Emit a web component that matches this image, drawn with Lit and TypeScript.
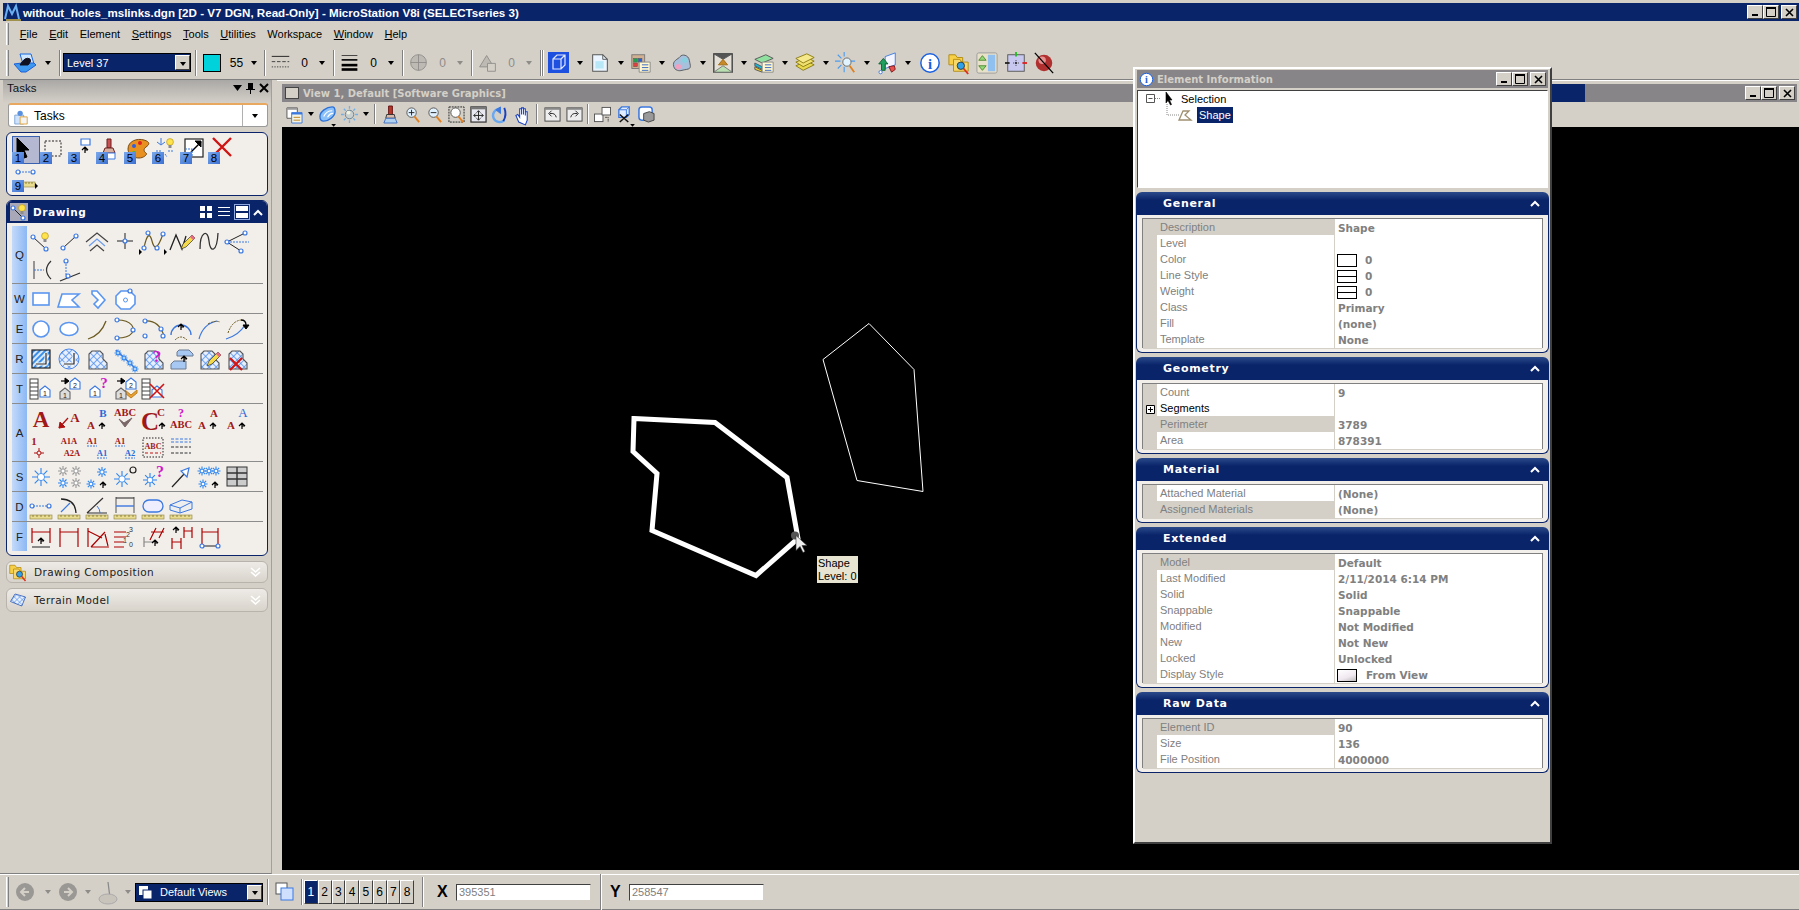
import { LitElement, html, css, svg } from 'lit';
import { customElement } from 'lit/decorators.js';

// small svg helpers, everything below is drawn in a 28x28 (or 24x24) box
const BL = '#3b78e0';
const P = (x: number, y: number) => svg`<circle cx=${x} cy=${y} r="2" fill="#fff" stroke=${BL} stroke-width="1.2"/>`;
const L = (d: string, c = '#222', w = 1, dash = '') =>
  svg`<path d=${d} fill="none" stroke=${c} stroke-width=${w} stroke-dasharray=${dash}/>`;
const F = (d: string, fill: string, c = BL, w = 1) => svg`<path d=${d} fill=${fill} stroke=${c} stroke-width=${w}/>`;
const T = (x: number, y: number, size: number, t: string, c = '#a01818', anchor = 'middle', font = 'Liberation Serif', weight = 'bold') =>
  svg`<text x=${x} y=${y} font-size=${size} fill=${c} text-anchor=${anchor} font-family=${font} font-weight=${weight}>${t}</text>`;
const fly = (x = 23, y = 24) => svg`<path d="M${x} ${y - 3}l3 3-3 3z" fill="#000"/>`;
const up = (x: number, y: number) => L(`M${x} ${y}v-6m-3 3l3-3 3 3m-3 0h3`, '#000', 1.2);
const bulb = (x: number, y: number) => svg`<circle cx=${x} cy=${y} r="3.4" fill="#ffe34d" stroke="#b79a20" stroke-width=".7"/><rect x=${x - 1.5} y=${y + 3} width="3" height="3" fill="#8b8b8b"/>`;
const pencil = (x: number, y: number) => svg`<path d="M${x} ${y}l2-5 9-9 3 3-9 9z" fill="#f4d94a" stroke="#333" stroke-width=".7"/><path d="M${x + 9} ${y - 12}l2-2 3 3-2 2z" fill="#e86a8a"/>`;
const redX = (x: number, y: number, r = 6, w = 2) => L(`M${x - r} ${y - r}L${x + r} ${y + r}M${x + r} ${y - r}L${x - r} ${y + r}`, '#d01414', w);
const star = (x: number, y: number, r = 6, c = '#2f86f0') => svg`
  ${L(`M${x - r} ${y}H${x + r}M${x} ${y - r}V${y + r}M${x - r * .7} ${y - r * .7}L${x + r * .7} ${y + r * .7}M${x + r * .7} ${y - r * .7}L${x - r * .7} ${y + r * .7}`, c, 1.1)}
  <circle cx=${x} cy=${y} r=${r * .4} fill="#fff" stroke=${c} stroke-width=".8"/>`;
const blob = 'M6 24V9l3-3h8l3 3 0 5 4 4v6z';
const tag = (x: number, y: number, n: string, fill = '#fff', c = BL) => svg`
  <path d="M${x - 5} ${y - 3}l5-4 5 4v7h-10z" fill=${fill} stroke=${c} stroke-width="1.1"/>
  ${T(x, y + 3, 7, n, '#222', 'middle', 'Liberation Sans', 'normal')}`;
const ruler = svg`<rect x="3" y="22" width="22" height="4" fill="#e9dc8e" stroke="#8a8040" stroke-width=".6"/>
  ${L('M6 22v2M10 22v2M14 22v2M18 22v2M22 22v2', '#6a6030', .7)}`;
const ruled = svg`<rect x="3" y="4" width="8" height="20" fill="#fff" stroke="#444"/>${L('M3 8h8M3 12h8M3 16h8M3 20h8', '#444')}`;

// Drawing task rows, each row has its tab letter and cells of 28px
const ROWS: { k: string; n: number; icons: unknown[] }[] = [
  { k: 'Q', n: 2, icons: [
    svg`${L('M6 10L19 22')}${P(6, 10)}${P(19, 22)}${bulb(18, 9)}`,
    svg`${L('M8 21L21 9')}${P(8, 21)}${P(21, 9)}`,
    svg`${L('M3 15L14 6 25 15', '#444', 1.2)}${L('M6 19L14 12 22 19', '#6a9cf0', 1.2)}${L('M7 24L14 18 21 24', '#444', 1.2)}`,
    svg`${L('M6 14H22M14 6V22')}${P(14, 14)}`,
    svg`${L('M5 21C8 6 11 6 13 14S18 24 24 7', '#6b5a20', 1.2)}${P(5, 21)}${P(9, 6)}${P(18, 21)}${P(24, 7)}${fly(0, 25)}${fly(25, 25)}`,
    svg`${L('M3 23L9 8 15 22 19 9', '#222', 1.3)}${pencil(14, 22)}`,
    svg`${L('M5 22C5 4 13 2 14 14S22 26 23 6', '#333', 1.3)}`,
    svg`${L('M4 15L22 6M4 15L18 24')}${L('M4 15H26', BL, 1, '2 1')}${P(4, 15)}${P(22, 6)}${P(18, 24)}`,
    svg`${L('M7 6V24', '#777', 1.5)}${L('M7 15H17', BL, 1, '2 1')}${L('M24 6Q15 15 24 24', '#333', 1.2)}`,
    svg`${L('M11 6V20', BL, 1, '2 1')}${L('M5 26L25 18', '#333', 1.2)}${P(11, 6)}${P(13, 21)}`,
  ] },
  { k: 'W', n: 1, icons: [
    svg`<rect x="6" y="8" width="16" height="12" fill="#fff" stroke="#5a96f0" stroke-width="1.6"/>`,
    F('M3 22L7 9H24L17 15 24 22z', '#fff', '#5a96f0', 1.6),
    F('M9 6H14L22 15 15 23 11 19 15 15 9 9z', '#fff', '#5a96f0', 1.6),
    svg`${F('M10 6H19L24 11V19L19 24H10L5 19V11z', '#fff', '#5a96f0', 1.6)}<circle cx="14.5" cy="15" r="2" fill="none" stroke="#5a96f0"/>${P(19, 6)}`,
  ] },
  { k: 'E', n: 1, icons: [
    svg`<circle cx="14" cy="14" r="8" fill="#fff" stroke="#5a96f0" stroke-width="1.6"/>`,
    svg`<ellipse cx="14" cy="14" rx="9" ry="6.5" fill="#fff" stroke="#5a96f0" stroke-width="1.6"/>`,
    L('M5 24Q18 20 23 6', '#6b5a20', 1.3),
    svg`${L('M6 5C22 5 24 14 21 18S12 23 6 23', '#6b5a20', 1.2)}${P(6, 5)}${P(22, 15)}${P(6, 23)}`,
    svg`${L('M6 6Q20 5 25 21', '#6b5a20', 1.2)}${P(6, 6)}${P(22, 14)}${P(6, 21)}${P(24, 21)}`,
    svg`${L('M4 20A10 10 0 0 1 24 20', BL, 1.4)}${up(14, 15)}${L('M8 25Q14 19 20 25', '#6b5a20', 1, '2 1')}`,
    svg`${L('M4 24Q8 9 22 6', BL, 1.2)}${L('M13 9Q20 5 25 7', '#6b5a20', 1, '2 1')}`,
    svg`${L('M3 24Q16 20 22 10', BL, 1.2)}${L('M5 18Q9 6 18 5', '#6b5a20', 1, '2 1')}${L('M18 5Q23 5 23 10', '#000', 1.3)}${F('M20 10h6l-3 4z', '#000', '#000')}`,
  ] },
  { k: 'R', n: 1, icons: [
    svg`<rect x="5" y="5" width="18" height="18" fill="url(#hatch)" stroke="#222" stroke-width="1.2"/>${L('M9 19H19V8', '#fff', 3)}${L('M9 19H19V8', '#222', 1.2)}`,
    svg`<circle cx="14" cy="14" r="10" fill="url(#lat)" stroke="#4a86e8"/>${L('M9 19H19V8', '#fff', 3)}${L('M9 19H19V8', '#222', 1.2)}`,
    F(blob, 'url(#lat)', '#555', 1.1),
    svg`${L('M5 5L24 23', BL, 1.6)}${star(7, 8, 3.5)}${star(13, 13, 3.5)}${star(19, 18, 3.5)}${star(24, 24, 3.5)}`,
    svg`${F(blob, 'url(#lat)', '#555', 1.1)}${T(18, 17, 17, '?', '#d018c8')}`,
    svg`${F('M10 11V7l2-2h10l4 4v2z', '#a8c8f4', '#6a7a90')}${F('M4 24V19l3-3h12v8z', '#a8c8f4', '#6a7a90')}${up(17, 17)}`,
    svg`${F(blob, 'url(#lat)', '#555', 1.1)}${pencil(12, 21)}`,
    svg`${F(blob, 'url(#lat)', '#555', 1.1)}${redX(13, 19, 6, 2.2)}`,
  ] },
  { k: 'T', n: 1, icons: [
    svg`${ruled}${tag(18, 18, '1')}`,
    svg`${L('M6 6h6', '#000', 1.2)}${F('M10 3l4 3-4 3z', '#000', '#000')}${tag(10, 20, '1', '#ddd', '#666')}${tag(20, 10, '2')}`,
    svg`${tag(12, 18, '1')}${T(21, 13, 15, '?', '#d018c8')}`,
    svg`${L('M6 6h6', '#000', 1.2)}${F('M10 3l4 3-4 3z', '#000', '#000')}${F('M14 18l6 5 6-5v-3l-6 5-6-5z', '#e8a030', '#c08020')}${tag(10, 20, '1', '#ddd', '#666')}${tag(20, 10, '2')}`,
    svg`${ruled}${tag(18, 18, '', '#fff')}${redX(18, 16, 7, 1.6)}`,
  ] },
  { k: 'A', n: 2, icons: [
    T(14, 22, 23, 'A'),
    svg`${T(20, 17, 13, 'A')}${L('M4 23L13 13', '#b01010', 1.3)}${F('M4 23l1-6 5 5z', '#b01010', '#b01010')}`,
    svg`${T(8, 24, 11, 'A')}${T(20, 12, 11, 'B', '#2a68d8')}${up(19, 24)}`,
    svg`${T(14, 11, 10.5, 'ABC')}${F('M8 14l5 4 8-5-7 9z', '#7a6868', '#7a6868')}`,
    svg`${T(11, 25, 25, 'C')}${T(22, 11, 11, 'C')}${up(23, 24)}`,
    svg`${T(14, 12, 12, '?', '#d018c8')}${T(14, 23, 10.5, 'ABC')}`,
    svg`${T(7, 24, 11, 'A')}${T(19, 12, 11, 'A')}${up(18, 24)}`,
    svg`${T(8, 24, 11, 'A')}${T(20, 12, 13, 'A', '#2a68d8', 'middle', 'Liberation Serif', 'normal')}${up(19, 24)}`,
    svg`${T(7, 12, 11, '1')}${L('M12 15V25M7 20H17', '#b01010')}<circle cx="12" cy="20" r="2" fill="#f2eeea" stroke="#b01010"/>`,
    svg`${T(14, 11, 8.5, 'A1A')}${T(17, 23, 8.5, 'A2A')}`,
    svg`${T(9, 11, 8.5, 'A1')}${L('M4 13h10', BL, 1, '2 1')}${T(19, 23, 8.5, 'A1', '#2a68d8')}${L('M14 25h10', BL, 1, '2 1')}`,
    svg`${T(9, 11, 8.5, 'A1')}${L('M4 13h10', BL, 1, '2 1')}${T(19, 23, 8.5, 'A2', '#2a68d8')}${L('M14 25h10', BL, 1, '2 1')}`,
    svg`<rect x="4" y="5" width="20" height="19" fill="none" stroke="#222" stroke-dasharray="1.5 1.5"/>${T(14, 16, 8, 'ABC')}${L('M6 20h16', '#c01010', 1, '3 2')}`,
    svg`${L('M4 6h20M4 9h20', BL, 1, '3 1.5')}${L('M4 14h20M4 20h20', '#333', 1, '3 1.5')}`,
  ] },
  { k: 'S', n: 1, icons: [
    star(14, 14, 9),
    svg`${star(8, 8, 5, '#999')}${star(21, 8, 5, '#999')}${star(8, 20, 5)}${star(21, 20, 5, '#999')}`,
    svg`${star(8, 21, 4.5)}${star(19, 9, 5)}${up(20, 25)}`,
    svg`${star(11, 16, 8)}<circle cx="22" cy="7" r="3" fill="none" stroke="#222" stroke-width="1.2"/>`,
    svg`${star(11, 17, 7)}${T(21, 14, 16, '?', '#d018c8')}`,
    svg`${L('M5 24L18 10', '#222', 1.2)}${F('M14 8l8-3-2 9z', '#fff', BL, 1.2)}`,
    svg`${star(7, 8, 4.5)}${star(14, 8, 4.5)}${star(21, 8, 4.5)}${star(8, 21, 4.5)}${up(20, 25)}`,
    svg`<rect x="4" y="4" width="20" height="19" fill="#ccc" stroke="#333"/>${L('M4 10h20M4 16h20M14 4v19', '#333', 1.4)}`,
  ] },
  { k: 'D', n: 1, icons: [
    svg`${L('M6 13h14', BL, 1, '2 1')}${P(5, 13)}${P(22, 13)}${ruler}`,
    svg`${L('M6 6Q20 6 21 20', '#222', 1.3)}${L('M6 19L15 10', BL, 1.2)}${ruler}`,
    svg`${L('M4 20L20 5M4 20H24', '#333', 1.2)}${L('M14 13Q17 16 17 20', BL)}${ruler}`,
    svg`${L('M5 4V20M23 4V20', '#555')}${L('M5 5H23', '#222')}${L('M5 13H23', BL, 1.4)}${ruler}`,
    svg`<rect x="4" y="7" width="20" height="12" rx="6" fill="#eef" stroke=${BL} stroke-width="1.3"/>${ruler}`,
    svg`${F('M3 12L15 7l10 2v7L13 20 3 17z', '#eee', BL)}${L('M3 12l10 3 12-6M13 15v5', BL)}${ruler}`,
  ] },
  { k: 'F', n: 1, icons: [
    svg`${L('M5 5V20M23 5V20M5 9H23', '#a00', 1.2)}${L('M5 24H23', '#222', 1.2)}${up(14, 21)}`,
    L('M5 5V24M23 5V24M5 9H23', '#a00', 1.2),
    svg`${L('M5 5V24M5 8L19 15M22 11L25 23M8 24H26M8 24L22 9', '#a00', 1.2)}`,
    svg`${L('M3 9H15M3 14H15M3 19H13M3 24H13', '#a00', 1.2)}${T(20, 9, 7, '3', '#333', 'middle', 'Liberation Sans', 'normal')}${T(17, 14, 7, '2', '#333', 'middle', 'Liberation Sans', 'normal')}${T(14, 20, 7, '1', '#333', 'middle', 'Liberation Sans', 'normal')}${T(20, 24, 7, '0', '#333', 'middle', 'Liberation Sans', 'normal')}`,
    svg`${L('M5 14V24M5 19H15', '#888', 1.2)}${L('M17 5L11 17M25 5L20 15M12 9H25', '#a00', 1.2)}${up(16, 23)}`,
    svg`${L('M5 15V26M14 15V26M5 19H14M17 4V15M25 4V15M17 8H25', '#a00', 1.2)}${up(9, 10)}`,
    svg`${L('M7 5V23M23 5V23M7 9H23', '#a00', 1.2)}${L('M7 23H23', '#222', 1.2)}${P(7, 23)}${P(23, 23)}`,
  ] },
];

const arrowPath = 'M5 2V19L9 15 12 22 15 21 12 14 17 14z';
const PICK: unknown[] = [
  F(arrowPath, '#000', '#000'),
  L('M5 5H21V20H5z', '#222', 1, '2 1.5'),
  svg`${F('M13 3h9v6h-9z', '#fff', BL, 1.2)}${up(17, 17)}`,
  svg`${F('M11 12V3h4v9z', '#c85050', '#6a2020')}${F('M7 17l2-5h8l2 5z', '#d8b0a0', '#6a2020')}${F('M8 17h11v6H8z', '#fff', BL)}`,
  svg`${F('M4 13C4 5 13 2 20 4s5 5 2 7-2 5 0 6-2 5-7 5S4 19 4 13z', '#e89020', '#7a4a10')}<circle cx="10" cy="10" r="2" fill="#3060e0"/><circle cx="16" cy="7" r="2" fill="#e02020"/><circle cx="10" cy="17" r="2" fill="#30c040"/>`,
  svg`${bulb(18, 6)}${L('M9 2V8M5 6L9 9M13 6L9 9', BL, 1)}${L('M4 15h5M7 18l-2 3M13 18l2 3M16 15h5', BL, 1, '2 1')}`,
  svg`<rect x="5" y="3" width="18" height="18" fill="#fff" stroke="#222" stroke-width="1.2"/>${L('M11 16L21 6', '#000', 1.4)}${F('M15 5h6v6z', '#000', '#000')}${L('M5 13h7v8', BL, 1.2, '2 1')}`,
  redX(14, 11, 9, 2.4),
  svg`${L('M7 8H20', BL, 1, '2 1')}${P(6, 8)}${P(21, 8)}<rect x="11" y="18" width="12" height="5" fill="#e9dc8e" stroke="#8a8040" stroke-width=".6"/>${L('M14 18v2M17 18v2M20 18v2', '#6a6030', .7)}${fly(23, 22)}`,
];

// top toolbar icons, 24x24
const sq = (x: number, y: number, s: number, c: string) => svg`<rect x=${x} y=${y} width=${s} height=${s} fill=${c} stroke="#5a5a5a" stroke-width=".6"/>`;
const TOP = {
  level: svg`${F('M7 3H18L21 13H10z', '#cfe8ff', '#1a68e0')}${F('M1 13L9 12H21L23 14 13 21 8 21z', '#3f98f0', '#1a60d8')}${F('M7 14Q12 5 17 8 19 10 15 14z', '#101020', '#101020')}`,
  lines: svg`${L('M2 5H22', '#111')}${L('M2 11H22', '#333', 1, '4 2')}${L('M2 17H22', '#333', 1, '1.5 1.5')}`,
  weight: svg`${L('M3 4H21', '#333', 1)}${L('M3 9H21', '#111', 2)}${L('M3 15H21', '#000', 3)}${L('M3 20H21', '#000', 3)}`,
  dis1: svg`<circle cx="12" cy="12" r="9" fill="#bdbab4" stroke="#8e8c88"/>${L('M12 3V21M3 12H21', '#8e8c88')}`,
  dis2: svg`${F('M11 4L19 17H3z', '#bdbab4', '#8e8c88')}${F('M12 13h9v9h-9z', '#d4d0c8', '#8e8c88')}`,
  cube: svg`<rect x="1" y="1" width="21" height="21" fill="#1e50e0"/>${L('M6 8L10 4H18V14L14 18H6zM6 8H14V18M14 8L18 4', '#dfe8ff', 1.2)}`,
  doc: svg`${F('M4 3H15L20 8V21H4z', '#eaf5ff', '#555', 1.1)}${L('M15 3V8H20', '#555')}<rect x="7" y="10" width="9" height="8" fill="#b8e8f8"/>`,
  refs: svg`<rect x="2" y="3" width="14" height="15" fill="#d0b090" stroke="#777"/>${sq(4, 7, 4, '#22a050')}${sq(9, 7, 4, '#2060e0')}${sq(4, 12, 4, '#e04040')}${F('M10 11H22V22H10z', '#fff8d0', '#888')}${L('M13 14H20M13 17H20M13 20H20', '#3060c0')}`,
  blob: svg`${F('M3 16C1 9 8 8 10 5s9-2 10 4 3 9-3 10-7 2-10 1-3-2-4-4z', '#a8c0dc', '#555')}<circle cx="8" cy="16" r="3" fill="#f0a0c0"/><circle cx="15" cy="9" r="3" fill="#88d0e0"/>`,
  raster: svg`<rect x="2" y="2" width="20" height="20" fill="#e4e0d8" stroke="#333" stroke-width="1.4"/>${F('M2 2H22L12 8z', '#555', '#555')}${F('M7 14L12 8 17 14z', '#c88a28', '#a06a10')}${F('M2 22L12 15 22 22z', '#b8e0b0', '#777')}`,
  layers2: svg`${F('M2 8L14 3 22 7 10 12z', '#90e0a0', '#555')}${F('M2 12l8 4v3l-8-4z', '#18b8d8', '#555')}${F('M2 16l8 4v2l-8-3z', '#e8c830', '#555')}${F('M10 11H22V22H10z', '#fff8d0', '#888')}${L('M13 14H20M13 17H20M13 20H20', '#3060c0')}`,
  layers: svg`${F('M2 15L14 10 22 14 10 20z', '#e8d850', '#8a7a10')}${F('M2 11L14 6 22 10 10 16z', '#f0e070', '#8a7a10')}${F('M2 7L14 2 22 6 10 12z', '#f4e88a', '#8a7a10')}`,
  mag: svg`${L('M10 0V5M10 16V22M0 10H6M15 10H22M3 3L7 7M3 18L7 14', '#4a9cf0', 1.2)}<circle cx="13" cy="11" r="4.5" fill="#e0f4ff" stroke="#666"/>${L('M16 15L21 22', '#e08020', 2)}`,
  arrows: svg`${F('M10 5L21 1V14L10 18z', '#f4f4ff', BL)}${F('M8 7L13 13H10V20H6V13H3z', '#20a060', '#106030')}${F('M14 16l6-1 1 4-4 3z', '#e85050', '#801818')}<circle cx="5" cy="22" r="1.8" fill="#fff" stroke=${BL}/>`,
  info: svg`<circle cx="12" cy="12" r="10" fill="#fff" stroke="#1a60e0" stroke-width="1.6"/>${T(12, 18, 16, 'i', '#1a60e0')}`,
  folders: svg`${F('M1 3H8L10 6H16V14H1z', '#f8d048', '#b08a10')}${F('M6 8H13L15 11H22V21H6z', '#f8d868', '#b08a10')}<circle cx="14" cy="15" r="4" fill="#30a0e8" stroke="#333"/>${L('M17 18L22 24', '#e03020', 2)}`,
  pane: svg`<rect x="1" y="1" width="22" height="22" rx="2" fill="#e8e0c8" stroke="#999"/><rect x="13" y="3" width="8" height="18" fill="#90c0f0"/>${F('M7 4l4 5H3z', '#90d878', '#508a30')}${F('M7 20l4-5H3z', '#90d878', '#508a30')}`,
  crosshair: svg`<rect x="3" y="3" width="18" height="18" fill="#c8c8f0" stroke="#555"/>${L('M12 0V5', '#20c020', 2)}${L('M0 12H5', '#222', 2)}${L('M19 12H24', '#e02020', 2)}<circle cx="12" cy="12" r="1" fill="#000"/>${L('M9 12h1M14 12h1M12 9v1M12 14v1')}`,
  ball: svg`<circle cx="12" cy="12" r="9" fill="#b03030"/><circle cx="10" cy="9" r="4" fill="#e89090"/>${L('M2 1L22 23', '#000', 1.4)}`,
};

// view toolbar icons
const VIEW = {
  win: svg`${F('M1 2H12V13H1z', '#fff', '#555')}<rect x="1" y="2" width="11" height="2" fill="#999"/>${F('M6 7H17V18H6z', '#f4f4e0', BL)}<rect x="6" y="7" width="11" height="2" fill=${BL}/>${L('M8 12h7M8 15h7', '#c08020')}`,
  link: svg`${F('M1 11C1 6 8 1 14 1c3 0 3 3 3 5 0 5-7 10-12 10-4 0-4-3-4-5z', '#8cc0f8', '#2a70d8', 1.4)}${L('M5 11Q8 5 14 5M9 12Q12 7 15 8', '#fff', 1.2)}<path d="M13 19h5l-2.500 3z" fill="#000"/>`,
  sun: svg`<circle cx="9" cy="9" r="4.5" fill="#c8d0d0" stroke="#6a8090"/><circle cx="8" cy="7" r="2" fill="#f4f4e0"/>${L('M9 0V3M9 15V18M0 9H3M15 9H18M3 3L5 5M13 13L15 15M15 3L13 5M3 15L5 13', '#70b0e8', 1.4)}`,
  brush: svg`${F('M7 0h4v9H7z', '#b83828', '#601010')}${F('M5 9h8l1 4H4z', '#d8b8a8', '#333')}${F('M4 13h10l2 5H2z', '#b0d0f0', '#4070c0')}`,
  zin: svg`<circle cx="8" cy="7" r="5" fill="#dff0ff" stroke="#555"/>${L('M5 7h6M8 4v6', '#222')}${L('M11 11L16 17', '#e08020', 2)}`,
  zout: svg`<circle cx="8" cy="7" r="5" fill="#dff0ff" stroke="#555"/>${L('M5 7h6', '#222')}${L('M11 11L16 17', '#e08020', 2)}`,
  zwin: svg`<rect x="1" y="1" width="16" height="16" fill="none" stroke="#222" stroke-dasharray="2 1"/><circle cx="8" cy="7" r="5" fill="#fff" stroke="#555"/>${L('M11 11L16 17', '#e08020', 2)}`,
  fit: svg`<rect x="1" y="1" width="16" height="16" fill="#e8e8f0" stroke="#333" stroke-width="1.3"/><rect x="1" y="1" width="16" height="2.500" fill="#777"/>${L('M4 10H14M9 5V15M4 10l2-2M4 10l2 2M14 10l-2-2M14 10l-2 2M9 5l-2 2M9 5l2 2M9 15l-2-2M9 15l2-2', '#222')}`,
  rot: svg`${L('M8 3A7 7 0 1 0 13 15', '#6aa8f0', 2.5)}${F('M9 8V1L4 4z', BL, BL)}${L('M13 2Q16 9 12 16', '#1a40c0', 2)}`,
  hand: svg`${F('M5 17L2 10l2-1 2 3V3h2v6-7h2v7-6h2v7-4h2v9l-2 5z', '#fff', '#1a40c0', 1.1)}`,
  prev: svg`<rect x="1" y="2" width="16" height="14" fill="#eee" stroke="#444"/><rect x="1" y="2" width="16" height="2" fill="#888"/>${L('M13 12Q12 7 6 8M8 5L5 8 8 11', '#222')}`,
  next: svg`<rect x="1" y="2" width="16" height="14" fill="#eee" stroke="#444"/><rect x="1" y="2" width="16" height="2" fill="#888"/>${L('M5 12Q6 7 12 8M10 5L13 8 10 11', '#222')}`,
  copy: svg`<rect x="0.500" y="8.500" width="9" height="8" fill="#fff" stroke="#555"/><rect x="8.500" y="1.500" width="9" height="8" fill="#fff" stroke="#555"/>${L('M12 12h3v5', '#222', 1, '1.500 1')}`,
  cubex: svg`${F('M3 4L6 1H14V9L11 12H3z', '#e0ecff', BL, 1.4)}${L('M3 4H11V12M11 4L14 1', BL)}${L('M4 17L13 9M4 9L13 17', '#111', 1.6)}<path d="M15 19h5l-2.500 3z" fill="#000"/>`,
  cam: svg`<rect x="1" y="1" width="14" height="14" rx="3" fill="#fff" stroke=${BL} stroke-width="1.6"/>${F('M6 8L12 6 17 8V15L11 17 6 15z', '#999', '#444')}`,
};

type Row = { n: string; v?: string; hl?: boolean; swatch?: string; plus?: boolean };
const SECTIONS: { title: string; rows: Row[] }[] = [
  { title: 'General', rows: [
    { n: 'Description', v: 'Shape', hl: true },
    { n: 'Level', v: '' },
    { n: 'Color', v: '0', swatch: 'plain' },
    { n: 'Line Style', v: '0', swatch: 'line' },
    { n: 'Weight', v: '0', swatch: 'line' },
    { n: 'Class', v: 'Primary' },
    { n: 'Fill', v: '(none)' },
    { n: 'Template', v: 'None' },
  ] },
  { title: 'Geometry', rows: [
    { n: 'Count', v: '9' },
    { n: 'Segments', v: '', plus: true },
    { n: 'Perimeter', v: '3789', hl: true },
    { n: 'Area', v: '878391' },
  ] },
  { title: 'Material', rows: [
    { n: 'Attached Material', v: '(None)' },
    { n: 'Assigned Materials', v: '(None)', hl: true },
  ] },
  { title: 'Extended', rows: [
    { n: 'Model', v: 'Default', hl: true },
    { n: 'Last Modified', v: '2/11/2014 6:14 PM' },
    { n: 'Solid', v: 'Solid' },
    { n: 'Snappable', v: 'Snappable' },
    { n: 'Modified', v: 'Not Modified' },
    { n: 'New', v: 'Not New' },
    { n: 'Locked', v: 'Unlocked' },
    { n: 'Display Style', v: 'From View', swatch: 'style' },
  ] },
  { title: 'Raw Data', rows: [
    { n: 'Element ID', v: '90', hl: true },
    { n: 'Size', v: '136' },
    { n: 'File Position', v: '4000000' },
  ] },
];

const MENU = [['F', 'ile'], ['E', 'dit'], ['', 'Element'], ['S', 'ettings'], ['T', 'ools'], ['U', 'tilities'], ['', 'Workspace'], ['W', 'indow'], ['H', 'elp']];

@customElement('app-root')
export class AppRoot extends LitElement {
  static styles = css`
    :host {
      display: block;
      width: 1799px;
      height: 910px;
      overflow: hidden;
      position: relative;
      background: #d4d0c8;
      font-family: "Liberation Sans", Arial, sans-serif;
      font-size: 11px;
      color: #000;
    }
    svg { display: block; overflow: visible; }
    .defs { position: absolute; width: 0; height: 0; }
    .app { display: flex; flex-direction: column; height: 910px; padding-top: 3px; box-sizing: border-box; }

    /* window caption */
    .titlebar {
      height: 18px; margin-left: 3px; flex: none;
      display: flex; align-items: center;
      background: #0a246a; color: #fff;
      font: bold 11.6px "Liberation Sans", sans-serif;
    }
    .titlebar .logo { width: 20px; margin-right: 0; }
    .caps { margin-left: auto; display: flex; padding-right: 2px; }
    .cap {
      width: 16px; height: 14px; box-sizing: border-box; background: #d4d0c8;
      border: 1px solid; border-color: #fff #404040 #404040 #fff;
      display: flex; align-items: center; justify-content: center;
    }
    .cap.x { margin-left: 2px; }

    .menu { height: 25px; flex: none; display: flex; align-items: center; padding-left: 6px; font-size: 11px; }
    .grip { width: 1px; height: 22px; border-left: 1px solid #fff; border-right: 1px solid #808080; flex: none; }
    .menu .item { padding: 0 5.8px; white-space: nowrap; }
    .menu .grip { margin-right: 5px; }

    /* main toolbar */
    .tools {
      height: 34px; flex: none; box-sizing: border-box; display: flex; align-items: center; padding-left: 6px;
      border-bottom: 1px solid #808080;
    }
    .tools .grip { height: 26px; margin-right: 4px; }
    .tool { width: 24px; height: 24px; flex: none; display: flex; align-items: center; justify-content: center; }
    .tool.info { width: 28.5px; }
    .arr { width: 17px; flex: none; display: flex; justify-content: center; }
    .arr::before { content: ""; border: 3.5px solid transparent; border-top: 4px solid #000; border-bottom: 0; }
    .arr.off::before { border-top-color: #8e8c88; }
    .sep { width: 0; height: 26px; flex: none; border-left: 1px solid #808080; border-right: 1px solid #fff; }
    .level {
      width: 128px; height: 19px; margin: 0 4px 0 2px; box-sizing: border-box; flex: none;
      background: #0a246a; color: #fff; border: 1px solid #000;
      display: flex; align-items: center; padding-left: 3px; font-size: 11px;
    }
    .combo-btn {
      margin-left: auto; width: 15px; height: 15px; box-sizing: border-box; background: #d4d0c8;
      border: 1px solid; border-color: #fff #404040 #404040 #fff;
      display: flex; align-items: center; justify-content: center;
    }
    .combo-btn::before { content: ""; border: 3px solid transparent; border-top: 4px solid #000; border-bottom: 0; margin-top: 2px; }
    .color { width: 18px; height: 18px; flex: none; background: #00d2dc; border: 1px solid #000; box-sizing: border-box; margin: 0 3px 0 6px; }
    .attr { display: flex; align-items: center; flex: none; width: 67px; }
    .attr.count { width: 40px; }
    .attr .val { width: 25px; text-align: center; font-size: 12px; }
    .attr .val.off { color: #8e8c88; }
    .attr .tool { margin-left: 2px; }
    .attr .arr { width: 10px; }
    .first { width: 22px; }
    .tool.cube { margin-left: 3px; }

    .main { flex: 1; display: flex; min-height: 0; }

    /* tasks dock */
    .dock { width: 272px; flex: none; box-sizing: border-box; padding-left: 3px; border-bottom: 1px solid #808080; border-right: 1px solid #a0a0a0; }
    .dock-title {
      height: 23px; box-sizing: border-box; padding: 0 0 7px 4px; display: flex; align-items: center; font-size: 11.5px;
      background: linear-gradient(#aaa8a6, #d4d0c8); color: #111;
    }
    .dock-title .ctl { margin-left: auto; display: flex; gap: 4px; padding-right: 2px; align-items: center; }
    .stack { padding: 0 0 0 3px; width: 262px; display: flex; flex-direction: column; }
    .task-combo {
      height: 24px; margin: 0 0 5px 2px; width: 260px; box-sizing: border-box;
      background: #fff; border: 1px solid #9a9a9a; border-top: 2px solid #e8a860; border-radius: 3px;
      display: flex; align-items: center; padding-left: 4px; gap: 5px; font-size: 12px;
    }
    .task-combo .drop { margin-left: auto; width: 24px; height: 100%; border-left: 1px solid #b0b0b0; display: flex; align-items: center; justify-content: center; }
    .task-combo .drop::before { content: ""; border: 3.5px solid transparent; border-top: 4px solid #000; border-bottom: 0; }
    .box { background: #f2eeea; border: 1px solid #0a246a; border-radius: 6px; box-sizing: border-box; }
    .pick { height: 64px; padding: 3px 20px 0 5px; display: flex; flex-wrap: wrap; align-content: flex-start; margin-bottom: 4px; }
    .pcell { width: 28px; height: 28px; position: relative; box-sizing: border-box; }
    .pcell.on { background: #b4b8d0; outline: 1px solid #3a60b0; outline-offset: -1px; }
    .badge {
      position: absolute; left: 0; bottom: 0; width: 12px; height: 12px;
      background: linear-gradient(135deg, #7aa8ec, #3c70d0); color: #000;
      font-size: 11.5px; line-height: 12px; text-align: center;
    }
    .drawing { height: 356px; margin-bottom: 5px; overflow: hidden; }
    .phead {
      height: 22px; background: #0a246a; color: #fff; display: flex; align-items: center;
      font: bold 10.5px "DejaVu Sans", sans-serif; letter-spacing: .6px;
    }
    .phead .pic { width: 18px; height: 18px; margin: 0 5px 0 3px; background: #a8a8b8; }
    .phead .modes { margin-left: auto; display: flex; align-items: center; gap: 4px; padding-right: 4px; }
    .mode { width: 14px; height: 14px; }
    .mode.on { outline: 1px solid #90a8e0; }
    .rows { padding: 3px 5px 0 5px; }
    .drow { display: flex; border-bottom: 1px solid #8c8c8c; width: 251px; box-sizing: border-box; }
    .drow:last-child { border-bottom: 0; }
    .dtab {
      width: 15px; flex: none; display: flex; align-items: center; justify-content: center;
      background: linear-gradient(90deg, #c4dafa, #8cb8f4); font-size: 11.5px; color: #222;
    }
    .dcells { display: flex; flex-wrap: wrap; align-content: flex-start; padding: 1px 0 0; width: 236px; }
    .dcell { width: 28px; height: 28px; }
    .fold {
      height: 22px; margin-bottom: 5px; border: 1px solid #b8b4ac; border-radius: 6px; box-sizing: border-box;
      background: linear-gradient(#eeeae6, #d8d4cc);
      display: flex; align-items: center; font: 10.5px "DejaVu Sans", sans-serif; letter-spacing: .4px; color: #222;
    }
    .fold .fi { width: 18px; margin: 0 7px 0 2px; }
    .fold .fc { margin-left: auto; margin-right: 6px; }
    .fold + .fold { height: 24px; }

    /* view window */
    .view { flex: 1; min-width: 0; display: flex; flex-direction: column; margin-left: 5px; padding-left: 5px; border-top: 1px solid #fff; background: #d4d0c8; }
    .view-title {
      height: 18px; margin-top: 3px; flex: none; display: flex; align-items: center; background: #878587; color: #d4d0c8;
      font: bold 10px "DejaVu Sans", sans-serif; position: relative; margin-right: 2px;
    }
    .view-title .doc { width: 14px; height: 12px; margin: 0 4px 0 3px; background: #d4d0c8; border: 1px solid #444; box-sizing: border-box; }
    .view-title .blue { position: absolute; left: 1269px; width: 34px; top: 0; bottom: 0; background: #0a246a; }
    .view-title .caps { padding-right: 2px; }
    .view-tools { height: 24.5px; flex: none; display: flex; align-items: center; padding-left: 1px; }
    .vt { width: 22px; flex: none; display: flex; justify-content: center; position: relative; }
    .view-tools .arr { width: 11px; }
    .view-tools .sep { height: 20px; margin: 0 3px; }
    .view-tools .sep.tight { margin: 0 2px; }
    .canvas { height: 743.5px; flex: none; background: #000; position: relative; }
    .canvas svg { position: absolute; left: 0; top: 0; }
    .tip {
      position: absolute; left: 535px; top: 429.5px; width: 41px; height: 27px; box-sizing: border-box;
      background: #e8e4d2; color: #000; font-size: 11px; line-height: 13px; padding: 1px 0 0 1px;
    }

    /* status bar */
    .status {
      height: 36px; flex: none; box-sizing: border-box; display: flex; align-items: center; padding-left: 6px;
      border-bottom: 1px solid #808080; border-top: 1px solid #fff; font-size: 11px; position: relative;
    }
    .status .grip { height: 30px; }
    .st { flex: none; display: flex; justify-content: center; align-items: center; width: 26px; }
    .st.back { width: 32px; }
    .st.cascade { width: 32px; }
    .status .arr { width: 14px; }
    .status .arr::before { border-top-color: #8e8c88; }
    .views {
      width: 128px; height: 19px; flex: none; box-sizing: border-box; margin: 0 4px 0 0;
      background: #0a246a; color: #fff; border: 1px solid #000; display: flex; align-items: center; gap: 8px; padding-left: 2px;
    }
    .vbtns { display: flex; height: 24px; flex: none; margin-left: 1px; }
    .vb { width: 13.75px; box-sizing: border-box; background: #d4d0c8; border: 1px solid; border-color: #fff #404040 #404040 #fff; font-size: 12px; display: flex; align-items: center; justify-content: center; }
    .vb.on { background: #0a246a; color: #fff; }
    .sep.end { margin-left: 8px; height: 30px; }
    .sep.mid { margin-left: 9px; height: 36px; }
    .axis { font: bold 16px "Liberation Sans", sans-serif; width: 19px; flex: none; }
    .axis.x { margin-left: 13px; }
    .axis.y { margin-left: 8px; }
    .coord {
      width: 135px; height: 17px; box-sizing: border-box; background: #fff; color: #808080;
      border: 1px solid; border-color: #404040 #d4d0c8 #d4d0c8 #404040;
      display: flex; align-items: center; padding-left: 2px; font-size: 11px; flex: none;
    }

    /* element information */
    .info-win {
      position: absolute; left: 1133px; top: 67px; width: 419px; height: 777px; box-sizing: border-box;
      background: #d4d0c8; border: 2px solid; border-color: #fff #404040 #404040 #fff;
      padding: 1px 2px 0 2px;
    }
    .info-title {
      height: 18px; display: flex; align-items: center; background: #878587; color: #d4d0c8;
      font: bold 10px "DejaVu Sans", sans-serif; padding-left: 2px; gap: 3px;
    }
    .info-title .caps { padding-right: 2px; }
    .tree {
      height: 98px; margin-top: 2px; box-sizing: border-box; background: #fff;
      border: 1px solid; border-color: #404040 #fff #fff #404040; font-size: 11px; margin-bottom: 4px;
    }
    .tree-row { height: 16px; display: flex; align-items: center; }
    .tree-sel { background: #0a246a; color: #fff; padding: 0 2px; height: 16px; line-height: 16px; }
    .sect { margin: 0 -1px 4px -1px; }
    .shead {
      height: 23px; border-radius: 6px 6px 0 0; background: linear-gradient(#2a4a8a 0, #0a246a 35%, #0a246a 100%);
      color: #fff; display: flex; align-items: center; padding-left: 27px;
      font: bold 11px "DejaVu Sans", sans-serif; letter-spacing: .7px;
    }
    .shead .chev { margin-left: auto; margin-right: 9px; }
    .sbody {
      background: #f2eeea; border: 1px solid #0a246a; border-top: 0; border-radius: 0 0 6px 6px;
      padding: 3px 5px 4px 5px;
    }
    .ptable { border: 1px solid #808080; background: #d4d0c8; }
    .prow { display: grid; grid-template-columns: 14px 177px 1fr; height: 16px; }
    .pgut { background: #d4d0c8; display: flex; align-items: center; justify-content: center; }
    .pname { background: #fff; color: #808080; border-bottom: 1px solid #d4d0c8; font-size: 11px; line-height: 17px; padding-left: 3px; white-space: nowrap; box-sizing: border-box; }
    .pname.hl { background: #d4d0c8; }
    .pname.blk { color: #000; }
    .pval {
      background: #fff; color: #808080; border-left: 1px solid #d4d0c8; border-bottom: 1px solid #d4d0c8; box-sizing: border-box;
      font: bold 10.5px "DejaVu Sans", sans-serif; line-height: 15px; padding: 1px 0 0 3px; display: flex; align-items: center; white-space: nowrap;
    }
    .swatch { width: 20px; height: 13px; box-sizing: border-box; border: 1px solid #000; margin: 0 8px 0 -1px; background: #fff; flex: none; }
    .swatch.line { background: linear-gradient(#fff 5px, #000 5px, #000 6px, #fff 6px); }
    .swatch.style { background: linear-gradient(160deg, #fff, #f0e8f0 60%, #bbb); margin-right: 9px; }
  `;

  private caps() {
    return html`<div class="caps">
      <div class="cap"><svg width="8" height="8"><path d="M1 6h6v2H1z" fill="#000"/></svg></div>
      <div class="cap"><svg width="10" height="10"><path d="M.5 1.5h9v8h-9z" fill="none" stroke="#000"/><path d="M0 1h10" stroke="#000" stroke-width="2"/></svg></div>
      <div class="cap x"><svg width="9" height="9"><path d="M1 1l7 7M8 1l-7 7" stroke="#000" stroke-width="1.6"/></svg></div>
    </div>`;
  }

  private icon(f: unknown, s = 24, v = 24) {
    return html`<svg width=${s} height=${s} viewBox="0 0 ${v} ${v}">${f}</svg>`;
  }

  private tool(f: unknown, arrow = true) {
    return html`<div class="tool">${this.icon(f, 22)}</div>${arrow ? html`<div class="arr"></div>` : ''}`;
  }

  private attr(f: unknown, v: string, off = false) {
    return html`<div class="sep"></div><div class="attr">
      <div class="tool">${this.icon(f, 21)}</div><div class="val ${off ? 'off' : ''}">${v}</div><div class="arr ${off ? 'off' : ''}"></div>
    </div>`;
  }

  private vt(f: unknown) {
    return html`<div class="vt">${this.icon(f, 17, 18)}</div>`;
  }

  private section(s: { title: string; rows: Row[] }) {
    return html`<div class="sect">
      <div class="shead">${s.title}
        <svg class="chev" width="10" height="7"><path d="M1 6l4-4 4 4" fill="none" stroke="#fff" stroke-width="2"/></svg>
      </div>
      <div class="sbody"><div class="ptable">
        ${s.rows.map((r) => html`<div class="prow">
          <div class="pgut">${r.plus
            ? html`<svg width="9" height="9"><path d="M.5.5h8v8h-8zM2 4.5h5M4.5 2v5" fill="#fff" stroke="#000"/></svg>`
            : ''}</div>
          <div class="pname ${r.hl ? 'hl' : ''} ${r.plus ? 'blk' : ''}">${r.n}</div>
          <div class="pval">${r.swatch ? html`<span class="swatch ${r.swatch}"></span>` : ''}${r.v}</div>
        </div>`)}
      </div></div>
    </div>`;
  }

  render() {
    return html`
      <svg class="defs">
        <defs>
          <pattern id="hatch" width="4" height="4" patternUnits="userSpaceOnUse" patternTransform="rotate(45)">
            <rect width="4" height="4" fill="#d8e8ff"/><rect width="2" height="4" fill="#3a90e8"/>
          </pattern>
          <pattern id="lat" width="5" height="5" patternUnits="userSpaceOnUse" patternTransform="rotate(45)">
            <rect width="5" height="5" fill="#e8f0ff"/><path d="M0 0H5M0 0V5" stroke="#4a8ae8" stroke-width="1.4"/>
          </pattern>
        </defs>
      </svg>
      <div class="app">
        <div class="titlebar">
          <div class="logo">${this.icon(svg`${L('M2 16L5 3 9 11 13 3 16 16', '#6ab0f0', 2)}${L('M3 17H18', '#e0c040', 1.4)}`, 18, 18)}</div>
          <span>without_holes_mslinks.dgn [2D - V7 DGN, Read-Only] - MicroStation V8i (SELECTseries 3)</span>
          ${this.caps()}
        </div>

        <div class="menu">
          <div class="grip"></div>
          ${MENU.map(([u, rest]) => html`<span class="item">${u ? html`<u>${u}</u>` : ''}${rest}</span>`)}
        </div>

        <div class="tools">
          <div class="grip"></div>
          <div class="tool">${this.icon(TOP.level)}</div>
          <div class="arr first"></div>
          <div class="sep"></div>
          <div class="level">Level 37<div class="combo-btn"></div></div>
          <div class="sep"></div>
          <div class="color"></div>
          <div class="attr count"><div class="val">55</div><div class="arr"></div></div>
          ${this.attr(TOP.lines, '0')}
          ${this.attr(TOP.weight, '0')}
          ${this.attr(TOP.dis1, '0', true)}
          ${this.attr(TOP.dis2, '0', true)}
          <div class="sep"></div><div class="sep"></div>
          <div class="tool cube">${this.icon(TOP.cube)}</div><div class="arr"></div>
          ${[TOP.doc, TOP.refs, TOP.blob, TOP.raster, TOP.layers2, TOP.layers, TOP.mag, TOP.arrows].map((f) => this.tool(f))}
          ${[TOP.info, TOP.folders, TOP.pane, TOP.crosshair, TOP.ball].map((f) => html`<div class="tool info">${this.icon(f, 22)}</div>`)}
        </div>

        <div class="main">
          <div class="dock">
            <div class="dock-title">Tasks
              <div class="ctl">
                <svg width="9" height="6"><path d="M0 0h9L4.500 6z" fill="#000"/></svg>
                <svg width="9" height="12"><path d="M2 1h5v6h2v1H5v4H4V8H0V7h2z" fill="#000"/></svg>
                <svg width="10" height="10"><path d="M1 1l8 8M9 1l-8 8" stroke="#000" stroke-width="2"/></svg>
              </div>
            </div>
            <div class="stack">
              <div class="task-combo">
                ${this.icon(svg`${F('M2 8H12V18H2z', '#cfe4fc', '#7aa0d0')}<circle cx="8" cy="6" r="3" fill="#5a90e0"/>${F('M8 10h8v8H8z', '#f4f4f4', '#e0a030')}`, 16, 18)}
                Tasks<div class="drop"></div>
              </div>
              <div class="box pick">
                ${PICK.map((f, i) => html`<div class="pcell ${i === 0 ? 'on' : ''}">${this.icon(f, 28, 28)}<span class="badge">${i + 1}</span></div>`)}
              </div>
              <div class="box drawing">
                <div class="phead">
                  <div class="pic">${this.icon(svg`${L('M3 5L13 15')}${P(3, 5)}${P(13, 15)}${bulb(12, 5)}`, 18, 18)}</div>
                  Drawing
                  <div class="modes">
                    <svg class="mode" viewBox="0 0 14 14"><path d="M1 1h5v5H1zM8 1h5v5H8zM1 8h5v5H1zM8 8h5v5H8z" fill="#fff"/></svg>
                    <svg class="mode" viewBox="0 0 14 14"><path d="M1 2.500h12M1 6.500h12M1 10.500h12" stroke="#fff"/></svg>
                    <svg class="mode on" viewBox="0 0 14 14"><path d="M1 1h12v5H1zM1 8h12v5H1z" fill="#fff"/></svg>
                    <svg width="10" height="7"><path d="M1 6l4-4 4 4" fill="none" stroke="#fff" stroke-width="2"/></svg>
                  </div>
                </div>
                <div class="rows">
                  ${ROWS.map((r) => html`<div class="drow">
                    <div class="dtab">${r.k}</div>
                    <div class="dcells">
                      ${r.icons.map((f) => html`<div class="dcell">${this.icon(f, 28, 28)}</div>`)}
                    </div>
                  </div>`)}
                </div>
              </div>
              <div class="fold">
                <div class="fi">${this.icon(TOP.folders, 18)}</div>Drawing Composition
                <svg class="fc" width="11" height="10"><path d="M1 1l4.500 4 4.500-4M1 5l4.500 4 4.500-4" fill="none" stroke="#fff" stroke-width="1.6"/></svg>
              </div>
              <div class="fold">
                <div class="fi">${this.icon(svg`${F('M2 14L8 4 22 8 17 20z', 'url(#lat)', '#2050b0')}`, 18)}</div>Terrain Model
                <svg class="fc" width="11" height="10"><path d="M1 1l4.500 4 4.500-4M1 5l4.500 4 4.500-4" fill="none" stroke="#fff" stroke-width="1.6"/></svg>
              </div>
            </div>
          </div>

          <div class="view">
            <div class="view-title">
              <div class="doc"></div>View 1, Default [Software Graphics]
              <div class="blue"></div>
              ${this.caps()}
            </div>
            <div class="view-tools">
              ${this.vt(VIEW.win)}<div class="arr"></div>
              ${this.vt(VIEW.link)}
              ${this.vt(VIEW.sun)}<div class="arr"></div>
              <div class="sep"></div>
              ${[VIEW.brush, VIEW.zin, VIEW.zout, VIEW.zwin, VIEW.fit, VIEW.rot, VIEW.hand].map((f) => this.vt(f))}
              <div class="sep"></div>
              ${this.vt(VIEW.prev)}${this.vt(VIEW.next)}
              <div class="sep tight"></div>
              ${this.vt(VIEW.copy)}${this.vt(VIEW.cubex)}${this.vt(VIEW.cam)}
            </div>
            <div class="canvas">
              <svg width="1517" height="744">
                <g transform="translate(-282 -126.500)" fill="none" stroke="#fff">
                  <path d="M634 418L715 422 787 477 798 538 756 575 652 530 657 473 633 451z" stroke-width="5" stroke-linejoin="miter"/>
                  <path d="M869 323L914 369 923 491 857 480 823 359z" stroke-width="1"/>
                  <circle cx="795" cy="535" r="4" fill="#555" stroke="none"/>
                  <path d="M796 535V550L800 546 803 552 805 551 802 545 807 545z" fill="#eee" stroke="#333" stroke-width=".6"/>
                </g>
              </svg>
              <div class="tip">Shape<br />Level: 0</div>
            </div>
          </div>
        </div>

        <div class="status">
          <div class="grip"></div>
          <div class="st back">${this.icon(svg`<circle cx="10" cy="10" r="9" fill="#9a9894"/>${L('M14 10H6M10 6l-4 4 4 4', '#d4d0c8', 2)}`, 20, 20)}</div>
          <div class="arr"></div>
          <div class="st">${this.icon(svg`<circle cx="10" cy="10" r="9" fill="#9a9894"/>${L('M6 10H14M10 6l4 4-4 4', '#d4d0c8', 2)}`, 20, 20)}</div>
          <div class="arr"></div>
          <div class="st">${this.icon(svg`${L('M10 0L12 16', '#888', 1.2)}<ellipse cx="10" cy="17" rx="9" ry="5" fill="#c8c4bc" stroke="#aaa"/>`, 20, 20)}</div>
          <div class="arr"></div>
          <div class="views">
            ${this.icon(svg`<rect x="1" y="1" width="9" height="9" fill="#fff"/><rect x="5" y="5" width="9" height="9" fill="#fff" stroke="#0a246a"/>`, 14, 14)}
            Default Views<div class="combo-btn"></div>
          </div>
          <div class="sep"></div>
          <div class="st cascade">${this.icon(svg`<rect x="1" y="1" width="11" height="11" fill="#fff" stroke="#555"/><rect x="6" y="6" width="12" height="12" fill="#cfe0ff" stroke=${BL}/>`, 20, 20)}</div>
          <div class="sep"></div>
          <div class="vbtns">
            ${[1, 2, 3, 4, 5, 6, 7, 8].map((n) => html`<div class="vb ${n === 1 ? 'on' : ''}">${n}</div>`)}
          </div>
          <div class="sep end"></div>
          <div class="axis x">X</div>
          <div class="coord">395351</div>
          <div class="sep mid"></div>
          <div class="axis y">Y</div>
          <div class="coord">258547</div>
        </div>
      </div>

      <div class="info-win">
        <div class="info-title">
          ${this.icon(TOP.info, 15)}Element Information
          ${this.caps()}
        </div>
        <div class="tree">
          <div class="tree-row">
            <svg width="43" height="16">
              <path d="M8.500 3.500h8v8h-8zM10.500 7.500h4" fill="#fff" stroke="#555"/>
              <path d="M17 7.500h5" stroke="#888" stroke-dasharray="1 1"/>
              <path d="M28 1V12L30 9.500 32.500 14 33.500 13.500 31.500 9 34 9z" fill="#000" stroke="#000" stroke-width=".6"/>
            </svg>Selection
          </div>
          <div class="tree-row">
            <svg width="59" height="16">
              <path d="M29 -3V8H41" fill="none" stroke="#888" stroke-dasharray="1 1"/>
              <path d="M41 13L45 4H51L47 8 53 13z" fill="none" stroke="#a09070" stroke-width="1.3"/>
            </svg><span class="tree-sel">Shape</span>
          </div>
        </div>
        ${SECTIONS.map((s) => this.section(s))}
      </div>
    `;
  }
}
